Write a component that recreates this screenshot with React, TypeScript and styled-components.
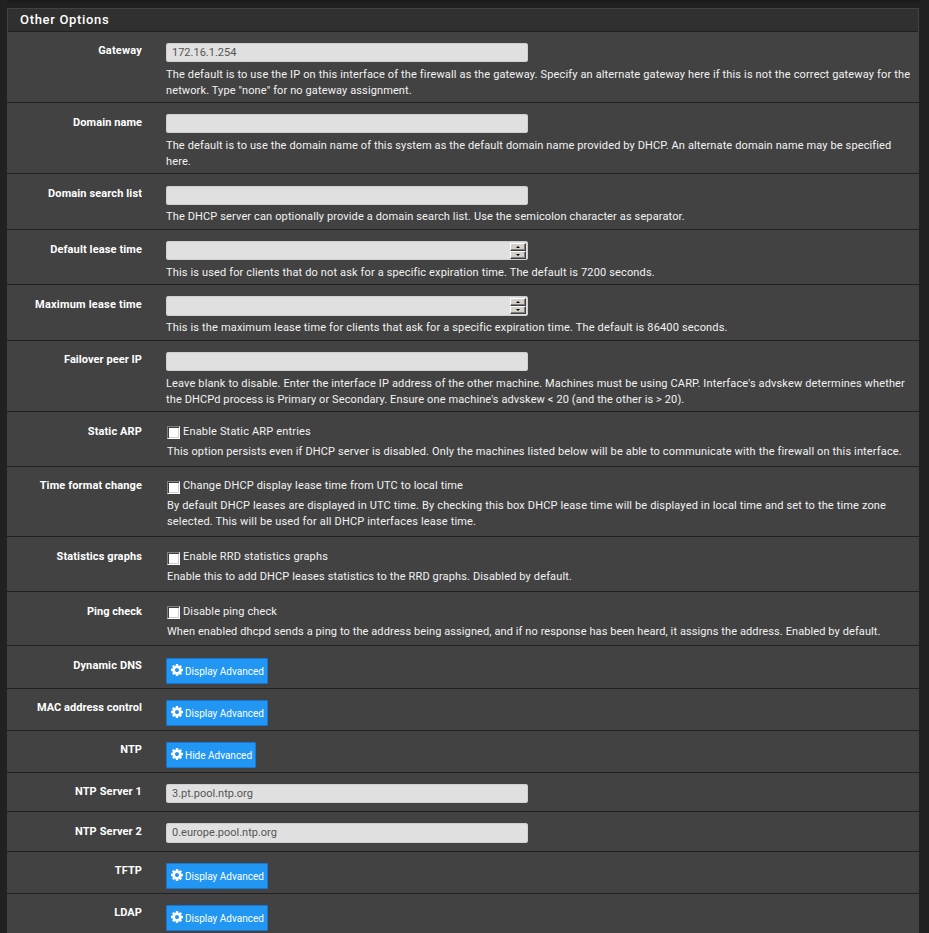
import React from "react";
import styled, { createGlobalStyle } from "styled-components";

const GlobalStyle = createGlobalStyle`
  * { box-sizing: border-box; }
  html, body { height: 100%; }
  body {
    margin: 0;
    overflow: hidden;
    background: #212121;
    color: #f2f2f2;
    font: 400 11px/16px Roboto, "Liberation Sans", sans-serif;
  }
`;

const Page = styled.main`
  display: flex;
  flex-direction: column;
  height: 933px;
  padding: 0 10px 0 7px;
  overflow: hidden;
`;

const PreviousShadow = styled.div`
  flex: none;
  height: 8px;
  background: linear-gradient(#191919, #1f1f1f 3px, #212121 5px);
`;

const Panel = styled.section`
  flex: none;
  background: #424242;
`;

const PanelHeader = styled.header`
  height: 24px;
  margin: 0 1px;
  border-top: 1px solid #424242;
  border-bottom: 1px solid #212121;
  background: #303030;
`;

const PanelTitle = styled.h2`
  margin: 0;
  padding: 2px 0 0 12px;
  color: #ffffff;
  font-size: 13px;
  font-weight: 500;
  line-height: 18px;
  letter-spacing: 0.68px;
`;

const Row = styled.div<{ $height: number }>`
  display: grid;
  grid-template-columns: 135px 1fr;
  column-gap: 24px;
  height: ${(p) => p.$height}px;
  border-bottom: 1px solid #212121;
  overflow: hidden;
`;

const Label = styled.label<{ $top: number; $tracking: number }>`
  padding-top: ${(p) => p.$top}px;
  color: #ffffff;
  font-weight: 700;
  text-align: right;
  letter-spacing: ${(p) => p.$tracking}px;
  white-space: nowrap;
`;

const Control = styled.div<{ $top: number }>`
  padding-top: ${(p) => p.$top}px;
`;

const Field = styled.div<{ $height: number }>`
  display: flex;
  align-items: flex-start;
  width: 362px;
  height: ${(p) => p.$height}px;
  border-radius: 3px;
  background: #e0e0e0;
  box-shadow: inset 0 0 0 1px #cfcfcf, inset 0 1px 1px rgba(0, 0, 0, 0.06);
`;

const Input = styled.input`
  flex: 1;
  min-width: 0;
  height: 19px;
  padding: 0 6px;
  border: 0;
  outline: 0;
  background: transparent;
  color: #555555;
  font: inherit;
`;

const Spinner = styled.div`
  display: flex;
  flex-direction: column;
  width: 16px;
  height: 16px;
  margin: 2px 2px 0 0;
`;

const Step = styled.button<{ $down?: boolean }>`
  display: flex;
  align-items: center;
  justify-content: center;
  width: 16px;
  height: 8px;
  padding: 0;
  border: 1px solid;
  border-color: #ffffff #404040 #404040 #ffffff;
  background: #d4d0c8;
  box-shadow: inset -1px -1px 0 #808080;

  &::before {
    content: "";
    border: 2px solid transparent;
    border-top: ${(p) => (p.$down ? "2px solid #000000" : "0")};
    border-bottom: ${(p) => (p.$down ? "0" : "2px solid #000000")};
  }
`;

const HelpText = styled.p<{ $gap: number; $indent?: number }>`
  margin: ${(p) => p.$gap}px 0 0 ${(p) => p.$indent ?? 0}px;
`;

const Line = styled.span<{ $tracking: number }>`
  display: block;
  letter-spacing: ${(p) => p.$tracking}px;
  white-space: nowrap;
`;

const CheckLine = styled.label<{ $boxTop: number }>`
  display: flex;
  gap: 3px;
  height: 16px;
  padding-left: 1px;

  input {
    flex: none;
    appearance: none;
    width: 13px;
    height: 13px;
    margin: ${(p) => p.$boxTop}px 0 0;
    border: 1px solid;
    border-color: #808080 #ffffff #ffffff #808080;
    background: #ffffff;
    box-shadow: inset 1px 1px 0 #404040, inset -1px -1px 0 #d4d0c8;
  }
`;

const AdvancedButton = styled.button<{ $width: number }>`
  display: flex;
  align-items: center;
  width: ${(p) => p.$width}px;
  height: 26px;
  padding: 0 0 0 4px;
  border: 1px solid #1976d2;
  border-radius: 1px;
  background: #2196f3;
  color: #ffffff;
  font: 400 10px/14px Roboto, "Liberation Sans", sans-serif;
  white-space: nowrap;

  svg {
    flex: none;
    width: 12px;
    height: 12px;
    margin: 0 2px 2px 0;
    fill: currentColor;
  }

  span {
    padding-top: 2px;
  }
`;

const CogIcon = () => (
  <svg viewBox="0 0 1536 1536" aria-hidden="true">
    <path d="M1024 768q0-106-75-181t-181-75-181 75-75 181 75 181 181 75 181-75 75-181zm512-109v222q0 12-8 23t-20 13l-185 28q-19 54-39 91 35 50 107 138 10 12 10 25t-9 23q-27 37-99 108t-94 71q-12 0-26-9l-138-108q-44 23-91 38-16 136-29 186-7 28-36 28h-222q-14 0-24.5-8.5t-11.5-21.5l-28-184q-49-16-90-37l-141 107q-10 9-25 9-14 0-25-11-126-114-165-168-7-10-7-23 0-12 8-23 15-21 51-66.5t54-70.5q-27-50-41-99l-183-27q-13-2-21-12.5t-8-23.5v-222q0-12 8-23t19-13l186-28q14-46 39-92-40-57-107-138-10-12-10-24 0-10 9-23 26-36 98.5-107.5t94.5-71.5q13 0 26 10l138 107q44-23 91-38 16-136 29-186 7-28 36-28h222q14 0 24.5 8.5t11.5 21.5l28 184q49 16 90 37l142-107q9-9 24-9 13 0 25 10 129 119 165 170 7 8 7 22 0 12-8 23-15 21-51 66.5t-54 70.5q26 50 41 98l183 28q13 2 21 12.5t8 23.5z" />
  </svg>
);

type TextLine = [text: string, tracking: number];

interface RowProps {
  label: string;
  height: number;
  labelTop?: number;
  tracking?: number;
}

interface FieldRowProps extends RowProps {
  top?: number;
  fieldHeight?: number;
  value?: string;
  stepper?: boolean;
  help?: TextLine[];
}

/* The help text starts at a fixed distance from the row's top edge. */
const HELP_TOP = 35;

const FieldRow = ({
  label, height, labelTop = 12, tracking = 0.12, top = 11, fieldHeight = 19, value = "", stepper, help,
}: FieldRowProps) => (
  <Row $height={height}>
    <Label $top={labelTop} $tracking={tracking}>{label}</Label>
    <Control $top={top}>
      <Field $height={fieldHeight}>
        <Input aria-label={label} defaultValue={value} />
        {stepper && (
          <Spinner>
            <Step aria-label="Increase" />
            <Step aria-label="Decrease" $down />
          </Spinner>
        )}
      </Field>
      {help && (
        <HelpText $gap={HELP_TOP - top - fieldHeight}>
          {help.map(([text, spacing]) => <Line key={text} $tracking={spacing}>{text}</Line>)}
        </HelpText>
      )}
    </Control>
  </Row>
);

interface CheckRowProps extends RowProps {
  option: TextLine;
  boxTop?: number;
  help: TextLine[];
}

const CheckRow = ({ label, height, labelTop = 12, tracking = 0.12, option, boxTop = 2, help }: CheckRowProps) => (
  <Row $height={height}>
    <Label $top={labelTop} $tracking={tracking}>{label}</Label>
    <Control $top={labelTop}>
      <CheckLine $boxTop={boxTop}>
        <input type="checkbox" />
        <Line $tracking={option[1]}>{option[0]}</Line>
      </CheckLine>
      <HelpText $gap={4} $indent={1}>
        {help.map(([text, spacing]) => <Line key={text} $tracking={spacing}>{text}</Line>)}
      </HelpText>
    </Control>
  </Row>
);

interface ButtonRowProps extends RowProps {
  top?: number;
  open?: boolean;
}

const ButtonRow = ({ label, height, labelTop = 11, tracking = 0.1, top = 11, open }: ButtonRowProps) => (
  <Row $height={height}>
    <Label $top={labelTop} $tracking={tracking}>{label}</Label>
    <Control $top={top}>
      <AdvancedButton $width={open ? 90 : 102}>
        <CogIcon />
        <span>{open ? "Hide Advanced" : "Display Advanced"}</span>
      </AdvancedButton>
    </Control>
  </Row>
);

export default function App() {
  return (
    <>
      <GlobalStyle />
      <Page>
        <PreviousShadow />
        <Panel>
          <PanelHeader>
            <PanelTitle>Other Options</PanelTitle>
          </PanelHeader>
          <FieldRow
            label="Gateway" height={71} labelTop={11} tracking={0.2} value="172.16.1.254"
            help={[
              ["The default is to use the IP on this interface of the firewall as the gateway. Specify an alternate gateway here if this is not the correct gateway for the", 0.149],
              ['network. Type "none" for no gateway assignment.', 0.115],
            ]}
          />
          <FieldRow
            label="Domain name" height={71} tracking={0.07}
            help={[
              ["The default is to use the domain name of this system as the default domain name provided by DHCP. An alternate domain name may be specified", 0.124],
              ["here.", 0.12],
            ]}
          />
          <FieldRow
            label="Domain search list" height={56} top={12}
            help={[["The DHCP server can optionally provide a domain search list. Use the semicolon character as separator.", 0.133]]}
          />
          <FieldRow
            label="Default lease time" height={55} stepper
            help={[["This is used for clients that do not ask for a specific expiration time. The default is 7200 seconds.", 0.144]]}
          />
          <FieldRow
            label="Maximum lease time" height={56} tracking={0.21} fieldHeight={20} stepper
            help={[["This is the maximum lease time for clients that ask for a specific expiration time. The default is 86400 seconds.", 0.162]]}
          />
          <FieldRow
            label="Failover peer IP" height={71} labelTop={11} tracking={0.06}
            help={[
              ["Leave blank to disable. Enter the interface IP address of the other machine. Machines must be using CARP. Interface's advskew determines whether", 0.142],
              ["the DHCPd process is Primary or Secondary. Ensure one machine's advskew < 20 (and the other is > 20).", 0.112],
            ]}
          />
          <CheckRow
            label="Static ARP" height={55} option={["Enable Static ARP entries", 0.17]}
            help={[["This option persists even if DHCP server is disabled. Only the machines listed below will be able to communicate with the firewall on this interface.", 0.147]]}
          />
          <CheckRow
            label="Time format change" height={70} labelTop={11} boxTop={3}
            option={["Change DHCP display lease time from UTC to local time", 0.147]}
            help={[
              ["By default DHCP leases are displayed in UTC time. By checking this box DHCP lease time will be displayed in local time and set to the time zone", 0.147],
              ["selected. This will be used for all DHCP interfaces lease time.", 0.17],
            ]}
          />
          <CheckRow
            label="Statistics graphs" height={55} boxTop={3} option={["Enable RRD statistics graphs", 0.162]}
            help={[["Enable this to add DHCP leases statistics to the RRD graphs. Disabled by default.", 0.139]]}
          />
          <CheckRow
            label="Ping check" height={54} tracking={0.05} option={["Disable ping check", 0.123]}
            help={[["When enabled dhcpd sends a ping to the address being assigned, and if no response has been heard, it assigns the address. Enabled by default.", 0.096]]}
          />
          <ButtonRow label="Dynamic DNS" height={43} labelTop={12} top={12} tracking={0.14} />
          <ButtonRow label="MAC address control" height={42} tracking={0.06} />
          <ButtonRow label="NTP" height={42} open />
          <FieldRow label="NTP Server 1" height={39} labelTop={11} value="3.pt.pool.ntp.org" />
          <FieldRow label="NTP Server 2" height={40} fieldHeight={20} value="0.europe.pool.ntp.org" />
          <ButtonRow label="TFTP" height={42} />
          <ButtonRow label="LDAP" height={42} />
        </Panel>
      </Page>
    </>
  );
}
